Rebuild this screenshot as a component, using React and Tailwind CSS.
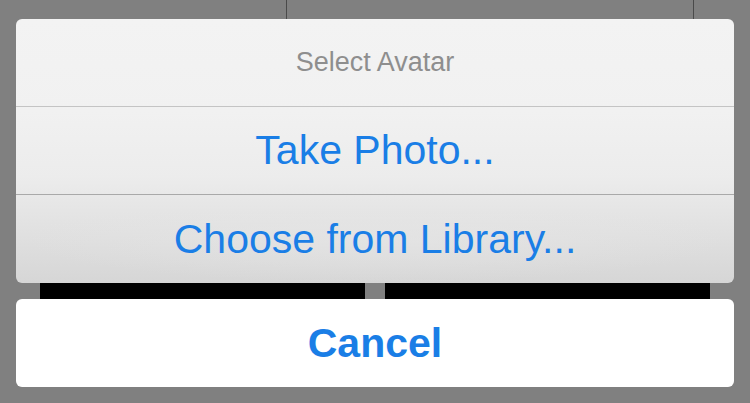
export default function App() {
  const font = { fontFamily: '"Liberation Sans", Arial, sans-serif' };
  return (
    <div
      className="w-[750px] h-[403px] bg-[#808080] flex flex-col px-4 overflow-hidden"
      style={font}
    >
      <div className="h-[19px] flex shrink-0">
        <div className="ml-[270px] w-[408px] border-x border-[#4a4a4a]" />
      </div>
      <div className="h-[264px] shrink-0 rounded-[6px] overflow-hidden flex flex-col bg-[linear-gradient(to_bottom,#f3f3f3_0%,#f1f1f1_35%,#ececec_60%,#e2e2e2_78%,#d6d6d6_100%)]">
        <div className="h-[88px] flex items-center justify-center border-b border-[#c4c4c4] shrink-0">
          <span className="text-[27px] text-[#8e8e8e] leading-none">Select Avatar</span>
        </div>
        <div className="h-[88px] flex items-center justify-center border-b border-[#a9a9a9] shrink-0">
          <span className="text-[41px] text-[#1a7ee6] leading-none">Take Photo...</span>
        </div>
        <div className="flex-1 flex items-center justify-center bg-[radial-gradient(ellipse_at_center,rgba(230,230,230,0.6)_0%,rgba(220,220,220,0)_70%)]">
          <span className="text-[41px] text-[#1a7ee6] leading-none">Choose from Library...</span>
        </div>
      </div>
      <div className="h-[16px] shrink-0 flex gap-[20px] pl-6">
        <div className="w-[325px] bg-black" />
        <div className="w-[325px] bg-black" />
      </div>
      <div className="h-[88px] shrink-0 rounded-[6px] bg-white flex items-center justify-center">
        <span className="text-[41px] font-bold text-[#1a7ee6] leading-none">Cancel</span>
      </div>
    </div>
  );
}
